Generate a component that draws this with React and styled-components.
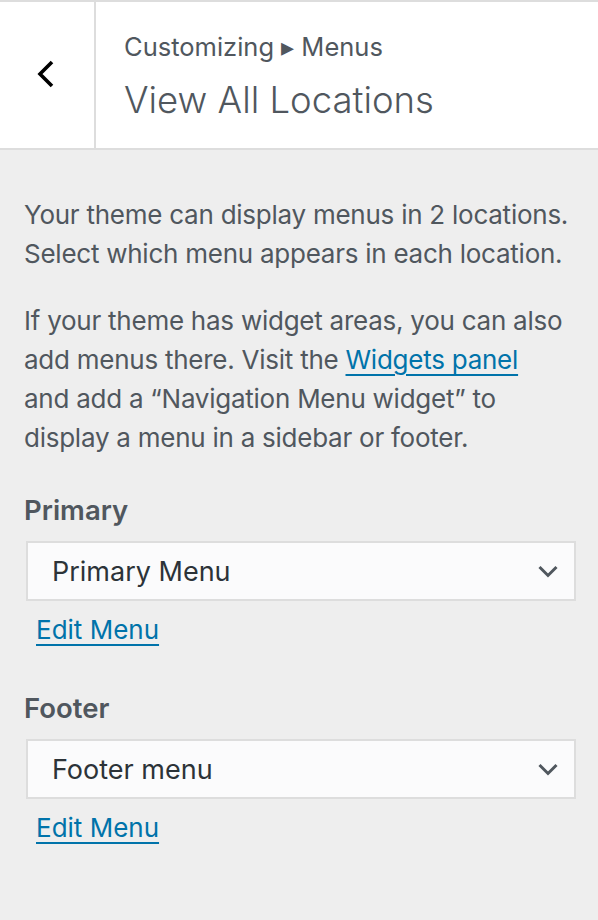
import React from 'react';
import styled, { createGlobalStyle } from 'styled-components';

const GlobalStyle = createGlobalStyle`
  html, body {
    margin: 0;
    padding: 0;
    background: #eeeeee;
  }
  body {
    font-family: Inter, "Noto Sans", sans-serif;
    -webkit-font-smoothing: antialiased;
  }
`;

const Panel = styled.div`
  width: 598px;
  min-height: 920px;
  background: #eeeeee;
  border-top: 2px solid #dddddd;
  box-sizing: border-box;
`;

const Header = styled.div`
    display: flex;
    flex-direction: row;
    height: 146px;
    background: #ffffff;
    border-bottom: 2px solid #dddddd;
`;

const BackButton = styled.button`
    width: 96px;
    flex-shrink: 0;
    border: 0;
    border-right: 2px solid #dddddd;
    background: transparent;
    display: flex;
    justify-content: center;
    align-items: center;
    padding: 0 2px 3px 0;
    cursor: pointer;
`;

const TitleBlock = styled.div`
    display: flex;
    flex-direction: column;
    justify-content: flex-start;
    padding: 29px 0 0 28px;
`;

const Crumb = styled.span`
    font-size: 25.5px;
    color: #50575e;
    line-height: 32px;
`;

const Title = styled.h3`
    margin: 14px 0 0 0;
    font-size: 36.5px;
    font-weight: 300;
    color: #50575e;
    line-height: 46px;
`;

const Content = styled.div`
    display: flex;
    flex-direction: column;
    padding: 45px 24px 0 24px;
`;

const Description = styled.p`
    margin: 0 0 28px 0;
    font-size: 26px;
    letter-spacing: -0.25px;
    line-height: 39px;
    color: #50575e;
`;

const Link = styled.a`
    color: #0073aa;
    text-decoration: underline;
    text-underline-offset: 5px;
    text-decoration-thickness: 2px;
`;

const Location = styled.div`
    display: flex;
    flex-direction: column;
    padding-top: 7px;
    margin-bottom: 36px;
`;

const Label = styled.label`
    font-size: 27.5px;
    font-weight: 600;
    color: #50575e;
    line-height: 36px;
`;

const SelectBox = styled.div`
    margin: 13px -2px 0 2px;
    height: 60px;
    box-sizing: border-box;
    border: 2px solid #dddddd;
    background: #fbfbfc;
    display: flex;
    flex-direction: row;
    align-items: center;
    justify-content: space-between;
    padding: 0 14px 0 24px;
`;

const SelectText = styled.span`
    font-size: 27px;
    color: #2c3338;
`;

const EditRow = styled.div`
    padding: 12px 0 0 12px;
    line-height: 34px;
    font-size: 26px;
`;

const DownChevron = () => (
    <svg width="24" height="24" viewBox="0 0 24 24" fill="none">
        <polyline points="3.5,8 12,16.5 20.5,8" stroke="#50575e" strokeWidth="3" />
    </svg>
);

const BackChevron = () => (
    <svg width="20" height="30" viewBox="0 0 20 30" fill="none">
        <polyline points="16,3 4,15 16,27" stroke="#000000" strokeWidth="3.6" />
    </svg>
);

const MenuLocation = ({ label, value }) => (
    <Location>
        <Label>{label}</Label>
        <SelectBox>
            <SelectText>{value}</SelectText>
            <DownChevron />
        </SelectBox>
        <EditRow>
            <Link href="#">Edit Menu</Link>
        </EditRow>
    </Location>
);

const App = () => (
    <Panel>
        <GlobalStyle />
        <Header>
            <BackButton aria-label="Back">
                <BackChevron />
            </BackButton>
            <TitleBlock>
                <Crumb>Customizing ▸ Menus</Crumb>
                <Title>View All Locations</Title>
            </TitleBlock>
        </Header>
        <Content>
            <Description>
                Your theme can display menus in 2 locations. Select which menu appears in each location.
            </Description>
            <Description>
                If your theme has widget areas, you can also add menus there. Visit the <Link href="#">Widgets panel</Link><br />
                and add a “Navigation Menu widget” to display a menu in a sidebar or footer.
            </Description>
            <MenuLocation label="Primary" value="Primary Menu" />
            <MenuLocation label="Footer" value="Footer menu" />
        </Content>
    </Panel>
);

export default App;
